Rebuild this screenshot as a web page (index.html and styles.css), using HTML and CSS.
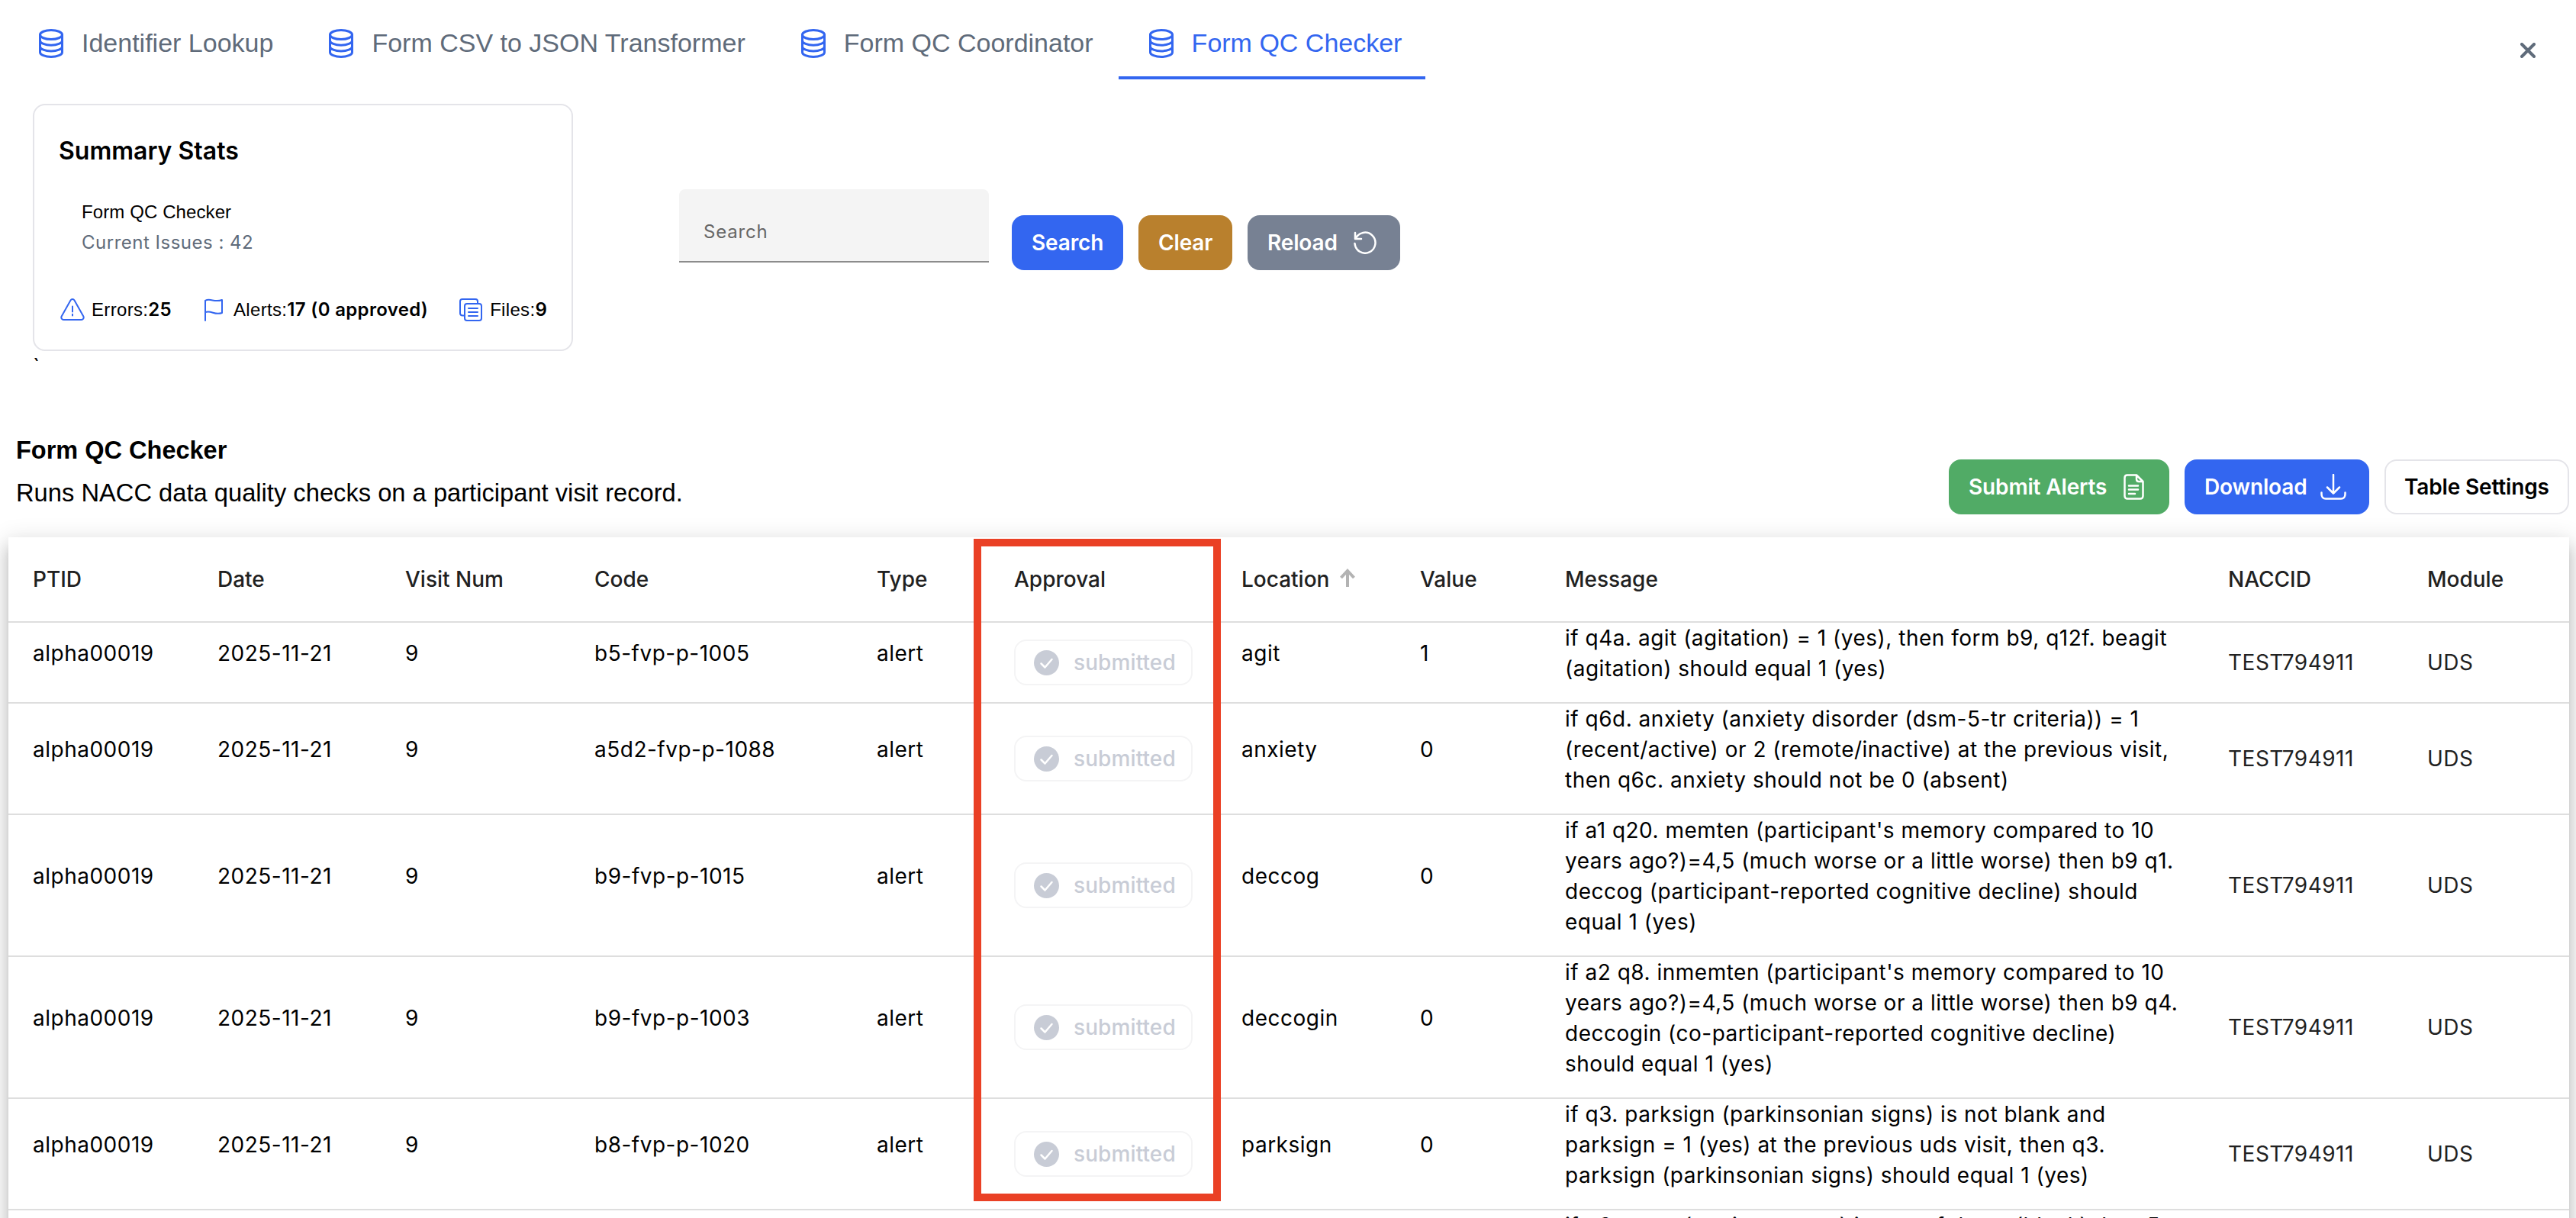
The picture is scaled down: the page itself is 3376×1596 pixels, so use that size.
FILE: index.html
```html
<!DOCTYPE html>
<html>
<head>
  <meta charset="utf-8">
  <title>Form QC Checker</title>
  <link rel="stylesheet" href="styles.css">
</head>
<body>
<svg class="symbols">
  <symbol id="database" viewBox="0 0 32 38">
    <ellipse cx="16" cy="7.5" rx="14.5" ry="6"/>
    <path d="M1.5 7.5v23c0 3.300 6.500 6 14.500 6s14.500-2.700 14.500-6v-23M1.500 15.200c0 3.300 6.500 6 14.500 6s14.500-2.700 14.500-6M1.500 22.900c0 3.300 6.500 6 14.500 6s14.500-2.700 14.500-6"/>
  </symbol>
  <symbol id="check" viewBox="0 0 33 33">
    <circle cx="16.500" cy="16.500" r="16.500" fill="#c8ccd6" stroke="none"/>
    <path d="M9.500 17.500l5 5 9-10.500" stroke="#fff" stroke-width="2.500"/>
  </symbol>
</svg>

<div class="topbar">
  <div class="tabs">
    <div class="tab"><svg class="db-icon"><use href="#database"/></svg>Identifier Lookup</div>
    <div class="tab"><svg class="db-icon"><use href="#database"/></svg>Form CSV to JSON Transformer</div>
    <div class="tab"><svg class="db-icon"><use href="#database"/></svg>Form QC Coordinator</div>
    <div class="tab active"><svg class="db-icon"><use href="#database"/></svg>Form QC Checker</div>
  </div>
  <svg class="close" viewBox="0 0 20 20"><path d="M2 2l16 16M18 2L2 18"/></svg>
</div>

<div class="overview">
  <div class="card">
    <h3>Summary Stats</h3>
    <div class="card-info">
      <p class="card-name">Form QC Checker</p>
      <p class="card-issues">Current Issues : 42</p>
    </div>
    <div class="stats">
      <svg class="icon-warn" viewBox="0 0 32 30"><path d="M13.500 2.500L1.700 23.500c-1 2 .2 4.500 2.800 4.500h23c2.600 0 3.800-2.500 2.800-4.500L18.500 2.500c-1.200-2-3.800-2-5 0z"/><path d="M16 10.500v7M16 20.800v1.800"/></svg>
      <span>Errors:<b>25</b></span>
      <svg class="icon-flag" viewBox="0 0 26 30"><path d="M2 29V2.800c7-3.500 12 3 22-.8v17c-10 3.500-13-3.500-22-1"/></svg>
      <span>Alerts:<b>17 (0 approved)</b></span>
      <svg class="icon-files" viewBox="0 0 30 30"><path d="M7 22.500H4.500c-2 0-3.500-1-3.500-3V4c0-2 1-3 3-3h17c2 0 3 1 3 3v2.500"/><rect x="7" y="7" width="22" height="22" rx="3"/><path d="M12 13h12M12 18h12M12 23h12"/></svg>
      <span>Files:<b>9</b></span>
    </div>
  </div>
  <div class="search-field">Search</div>
  <div class="buttons">
    <button class="btn blue search-btn">Search</button>
    <button class="btn brown">Clear</button>
    <button class="btn gray">Reload<svg class="icon-reload" viewBox="0 0 30 30"><path d="M2 2v8h8M2.500 10A13.500 13.500 0 1 1 1.500 16"/></svg></button>
  </div>
</div>
<p class="tick">`</p>

<div class="heading">
  <div>
    <h2>Form QC Checker</h2>
    <p>Runs NACC data quality checks on a participant visit record.</p>
  </div>
  <div class="buttons">
    <button class="btn green">Submit Alerts<svg class="icon-doc" viewBox="0 0 27 34"><path d="M17 1.500H5c-2 0-3.500 1.300-3.500 3.500v24c0 2 1.500 3.500 3.500 3.500h17c2 0 3.500-1.500 3.500-3.500V10zM17 1.500V7c0 2 1 3 3 3h5.500M7 15.500h12M7 20.500h12M7 26h8"/></svg></button>
    <button class="btn blue download-btn">Download<svg class="icon-down" viewBox="0 0 34 34"><path d="M17 1v24M9 17.500l8 8 8-8M1.500 24.500v2c0 3.500 2 6 5.500 6h20c3.500 0 5.500-2.500 5.500-6v-2"/></svg></button>
    <button class="btn plain">Table Settings</button>
  </div>
</div>

<div class="table-wrap">
<table>
  <thead>
    <tr>
      <th class="c-ptid">PTID</th>
      <th class="c-date">Date</th>
      <th class="c-visit">Visit Num</th>
      <th class="c-code">Code</th>
      <th class="c-type">Type</th>
      <th class="c-approval">Approval</th>
      <th class="c-location">Location<svg class="icon-sort" viewBox="0 0 20 24"><path d="M10 24V3M1.500 12L10 3l8.500 9"/></svg></th>
      <th class="c-value">Value</th>
      <th class="c-message">Message</th>
      <th class="c-naccid">NACCID</th>
      <th class="c-module">Module</th>
    </tr>
  </thead>
  <tbody>
    <tr>
      <td><p>alpha00019</p></td>
      <td><p>2025-11-21</p></td>
      <td><p>9</p></td>
      <td><p>b5-fvp-p-1005</p></td>
      <td><p>alert</p></td>
      <td><span class="badge"><svg><use href="#check"/></svg>submitted</span></td>
      <td><p>agit</p></td>
      <td><p>1</p></td>
      <td><p>if q4a. agit (agitation) = 1 (yes), then form b9, q12f. beagit<br>(agitation) should equal 1 (yes)</p></td>
      <td class="plain-text">TEST794911</td>
      <td class="plain-text">UDS</td>
    </tr>
    <tr>
      <td><p>alpha00019</p></td>
      <td><p>2025-11-21</p></td>
      <td><p>9</p></td>
      <td><p>a5d2-fvp-p-1088</p></td>
      <td><p>alert</p></td>
      <td><span class="badge"><svg><use href="#check"/></svg>submitted</span></td>
      <td><p>anxiety</p></td>
      <td><p>0</p></td>
      <td><p>if q6d. anxiety (anxiety disorder (dsm-5-tr criteria)) = 1<br>(recent/active) or 2 (remote/inactive) at the previous visit,<br>then q6c. anxiety should not be 0 (absent)</p></td>
      <td class="plain-text">TEST794911</td>
      <td class="plain-text">UDS</td>
    </tr>
    <tr>
      <td><p>alpha00019</p></td>
      <td><p>2025-11-21</p></td>
      <td><p>9</p></td>
      <td><p>b9-fvp-p-1015</p></td>
      <td><p>alert</p></td>
      <td><span class="badge"><svg><use href="#check"/></svg>submitted</span></td>
      <td><p>deccog</p></td>
      <td><p>0</p></td>
      <td><p>if a1 q20. memten (participant's memory compared to 10<br>years ago?)=4,5 (much worse or a little worse) then b9 q1.<br>deccog (participant-reported cognitive decline) should<br>equal 1 (yes)</p></td>
      <td class="plain-text">TEST794911</td>
      <td class="plain-text">UDS</td>
    </tr>
    <tr>
      <td><p>alpha00019</p></td>
      <td><p>2025-11-21</p></td>
      <td><p>9</p></td>
      <td><p>b9-fvp-p-1003</p></td>
      <td><p>alert</p></td>
      <td><span class="badge"><svg><use href="#check"/></svg>submitted</span></td>
      <td><p>deccogin</p></td>
      <td><p>0</p></td>
      <td><p>if a2 q8. inmemten (participant's memory compared to 10<br>years ago?)=4,5 (much worse or a little worse) then b9 q4.<br>deccogin (co-participant-reported cognitive decline)<br>should equal 1 (yes)</p></td>
      <td class="plain-text">TEST794911</td>
      <td class="plain-text">UDS</td>
    </tr>
    <tr>
      <td><p>alpha00019</p></td>
      <td><p>2025-11-21</p></td>
      <td><p>9</p></td>
      <td><p>b8-fvp-p-1020</p></td>
      <td><p>alert</p></td>
      <td><span class="badge"><svg><use href="#check"/></svg>submitted</span></td>
      <td><p>parksign</p></td>
      <td><p>0</p></td>
      <td><p>if q3. parksign (parkinsonian signs) is not blank and<br>parksign = 1 (yes) at the previous uds visit, then q3.<br>parksign (parkinsonian signs) should equal 1 (yes)</p></td>
      <td class="plain-text">TEST794911</td>
      <td class="plain-text">UDS</td>
    </tr>
    <tr>
      <td colspan="8"></td>
      <td><p>if q3a. rest (resting tremor) is one of these (blank) then 5</p></td>
      <td colspan="2"></td>
    </tr>
  </tbody>
</table>
<div class="highlight"></div>
</div>
</body>
</html>
```
FILE: styles.css
```css
html {
  overflow: hidden;
}

body {
  margin: 0;
  height: 1596px;
  overflow: hidden;
  font-family: Inter, "Liberation Sans", sans-serif;
  background: #fff;
  color: #000;
}

svg {
  flex: none;
  fill: none;
  stroke: #3366f0;
  stroke-width: 2;
  stroke-linecap: round;
  stroke-linejoin: round;
}

.symbols {
  position: absolute;
  width: 0;
  height: 0;
}

p, h2, h3 {
  margin: 0;
}

/* tabs */
.topbar {
  display: flex;
  height: 136px;
  padding-left: 11px;
}

.tabs {
  display: flex;
}

.tab {
  display: flex;
  box-sizing: border-box;
  height: 104px;
  padding: 38px 33px 0 40px;
  border-bottom: 4px solid transparent;
  font-family: "Liberation Sans", sans-serif;
  font-size: 34px;
  line-height: 37px;
  color: #5f6b7a;
}

.tab.active {
  padding-right: 31px;
  color: #3366f0;
  border-color: #3366f0;
}

.db-icon {
  width: 32px;
  height: 38px;
  margin-right: 24px;
  stroke-width: 3;
}

.close {
  width: 20px;
  height: 20px;
  margin: 56px 53px 0 auto;
  stroke: #5f6b7a;
  stroke-width: 4;
}

/* summary card and search */
.overview {
  display: flex;
  padding-left: 43px;
}

.card {
  box-sizing: border-box;
  width: 708px;
  height: 324px;
  padding: 40px 0 0 32px;
  border: 2px solid #e4e4e9;
  border-radius: 16px;
}

h3 {
  font-size: 32px;
  font-weight: 600;
  line-height: 40px;
}

.card-info {
  padding: 40px 0 48px 30px;
  font-size: 24px;
  line-height: 40px;
}

.card-name {
  font-family: "Liberation Sans", sans-serif;
  letter-spacing: 0.1px;
}

.card-issues {
  letter-spacing: 0.5px;
  color: #5f6b7a;
}

.stats {
  display: flex;
  align-items: center;
  padding-left: 2px;
  font-family: "Liberation Sans", sans-serif;
  font-size: 24px;
  line-height: 40px;
  letter-spacing: 0.33px;
  white-space: nowrap;
}

.stats b {
  font-family: Inter, sans-serif;
  font-weight: 600;
}

.icon-warn {
  width: 32px;
  height: 30px;
  margin-right: 9px;
}

.icon-flag {
  width: 26px;
  height: 30px;
  margin: 0 13px 0 42px;
}

.icon-files {
  width: 30px;
  height: 30px;
  margin: 0 10px 0 41px;
}

.search-field {
  box-sizing: border-box;
  width: 406px;
  height: 96px;
  margin: 112px 30px 0 139px;
  padding: 36px 0 0 32px;
  background: #f4f4f4;
  border-bottom: 2px solid #8c8c8c;
  border-radius: 8px 8px 0 0;
  font-size: 24px;
  line-height: 40px;
  letter-spacing: 0.8px;
  color: #666;
}

.buttons {
  display: flex;
  gap: 20px;
}

.overview .buttons {
  margin-top: 146px;
}

.btn {
  display: flex;
  align-items: center;
  box-sizing: border-box;
  height: 72px;
  padding: 0 0 0 26px;
  border: none;
  border-radius: 16px;
  font-family: Inter, sans-serif;
  font-size: 28px;
  font-weight: 600;
  letter-spacing: -0.15px;
  color: #fff;
}

.btn svg {
  stroke: #fff;
  stroke-width: 2.5;
}

.blue {
  background: #3366f0;
}

.search-btn {
  width: 146px;
}

.brown {
  width: 123px;
  background: #b9802d;
}

.gray {
  width: 200px;
  background: #778193;
}

.green {
  width: 289px;
  background: #51ab66;
}

.download-btn {
  width: 242px;
}

.plain {
  width: 242px;
  padding-left: 24px;
  border: 2px solid #e4e4e9;
  background: #fff;
  color: #000;
}

.icon-reload {
  width: 30px;
  height: 30px;
  margin-left: 21px;
}

.icon-doc {
  width: 27px;
  height: 34px;
  margin-left: 22px;
}

.icon-down {
  width: 34px;
  height: 34px;
  margin-left: 18px;
}

.tick {
  padding-left: 43px;
  font-size: 28px;
  line-height: 40px;
}

/* page heading */
.heading {
  display: flex;
  justify-content: space-between;
  height: 142px;
  margin-top: 62px;
  padding: 0 9px 0 21px;
  font-family: "Liberation Sans", sans-serif;
  font-size: 32.7px;
  line-height: 56px;
}

h2 {
  font-size: 32.5px;
  font-weight: 700;
}

.heading .buttons {
  margin-top: 40px;
}

/* table */
.table-wrap {
  position: relative;
  width: 3356px;
  margin-left: 11px;
  background: #fff;
  box-shadow: 0 10px 10px -6px rgba(0, 0, 0, 0.2), 0 16px 20px 2px rgba(0, 0, 0, 0.14), 0 6px 28px 4px rgba(0, 0, 0, 0.12);
}

table {
  width: 3356px;
  table-layout: fixed;
  border-spacing: 0;
  font-size: 28px;
  line-height: 40px;
}

th, td {
  padding: 0 0 0 32px;
  border-bottom: 2px solid #dedede;
  text-align: left;
  white-space: nowrap;
}

th {
  height: 110px;
  font-weight: 500;
  color: #212121;
}

td {
  letter-spacing: 0.5px;
}

td p {
  margin-bottom: 24px;
}

.plain-text {
  color: #212121;
}

.c-ptid { width: 210px; }
.c-date { width: 214px; }
.c-visit { width: 216px; }
.c-code { width: 338px; }
.c-type { width: 148px; }
.c-approval { width: 266px; }
.c-location { width: 202px; }
.c-value { width: 158px; }
.c-message { width: 837px; }
.c-naccid { width: 229px; }

.icon-sort {
  width: 20px;
  height: 24px;
  margin-left: 14px;
  stroke: #b3b3b3;
  stroke-width: 4;
  stroke-linecap: butt;
  stroke-linejoin: miter;
}

.badge {
  display: inline-flex;
  align-items: center;
  box-sizing: border-box;
  width: 234px;
  height: 60px;
  padding-left: 24px;
  border: 2px solid #f4f4f5;
  border-radius: 16px;
  font-weight: 500;
  letter-spacing: 0.1px;
  vertical-align: middle;
  color: #c8ccd6;
}

.badge svg {
  width: 33px;
  height: 33px;
  margin-right: 19px;
}

/* frame around the approval column */
.highlight {
  position: absolute;
  top: 2px;
  left: 1265px;
  box-sizing: border-box;
  width: 324px;
  height: 868px;
  border: 10px solid #ea4025;
}
```
